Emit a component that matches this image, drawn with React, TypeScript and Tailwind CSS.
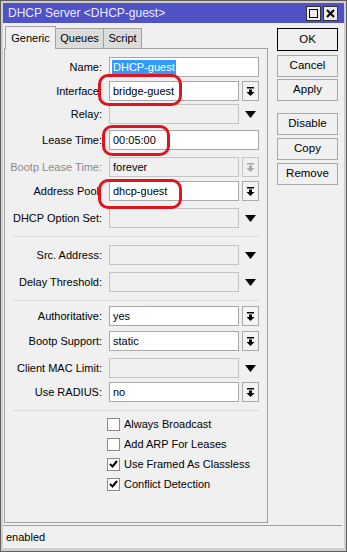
import { ReactNode } from 'react';

type Row = {
  label: string;
  value?: string;
  kind: 'text' | 'select' | 'arrow';
  mt: string;
  disabled?: boolean;
  selected?: boolean;
};

const ROWS_A: Row[] = [
  { label: 'Name:', value: 'DHCP-guest', kind: 'text', mt: 'mt-[8px]', selected: true },
  { label: 'Interface:', value: 'bridge-guest', kind: 'select', mt: 'mt-[4px]' },
  { label: 'Relay:', kind: 'arrow', mt: 'mt-[3px]', disabled: true },
  { label: 'Lease Time:', value: '00:05:00', kind: 'text', mt: 'mt-[6px]' },
  { label: 'Bootp Lease Time:', value: 'forever', kind: 'select', mt: 'mt-[7px]', disabled: true },
  { label: 'Address Pool:', value: 'dhcp-guest', kind: 'select', mt: 'mt-[4px]' },
  { label: 'DHCP Option Set:', kind: 'arrow', mt: 'mt-[7px]', disabled: true },
];

const ROWS_B: Row[] = [
  { label: 'Src. Address:', kind: 'arrow', mt: 'mt-[8px]', disabled: true },
  { label: 'Delay Threshold:', kind: 'arrow', mt: 'mt-[7px]', disabled: true },
];

const ROWS_C: Row[] = [
  { label: 'Authoritative:', value: 'yes', kind: 'select', mt: 'mt-[5px]' },
  { label: 'Bootp Support:', value: 'static', kind: 'select', mt: 'mt-[5px]' },
  { label: 'Client MAC Limit:', kind: 'arrow', mt: 'mt-[7px]', disabled: true },
  { label: 'Use RADIUS:', value: 'no', kind: 'select', mt: 'mt-[4px]' },
];

const CHECKS = [
  { label: 'Always Broadcast', on: false },
  { label: 'Add ARP For Leases', on: false },
  { label: 'Use Framed As Classless', on: true },
  { label: 'Conflict Detection', on: true },
];

function DropIcon({ muted }: { muted?: boolean }) {
  const c = muted ? '#a8a8a8' : '#000';
  return (
    <svg width="9" height="9" viewBox="0 0 9 9">
      <rect x="1" y="0" width="7" height="1.5" fill={c} />
      <path d="M3 2.5h3v2.5h2.5L4.5 9 0.5 5H3z" fill={c} />
    </svg>
  );
}

function Arrow() {
  return (
    <svg width="11" height="7" viewBox="0 0 11 7">
      <path d="M0 0h11L5.5 7z" fill="#000" />
    </svg>
  );
}

function Field({ row }: { row: Row }) {
  const box = row.disabled
    ? 'bg-[#f0f0f0] border-[#c4c4c4] text-[#000]'
    : 'bg-white border-[#a9a9a9] text-black';
  const wide = row.kind === 'text';
  return (
    <div className="flex items-center gap-[3px]">
      <div className={`h-[20px] border flex items-center pl-[2px] ${box} ${wide ? 'w-[150px]' : 'w-[130px]'}`}>
        {row.value && (
          <span className={row.selected ? 'bg-[#3399ff] text-white px-[1px] py-[2px]' : 'px-[1px]'}>{row.value}</span>
        )}
      </div>
      {row.kind === 'select' && (
        <div
          className={`w-[17px] h-[20px] border flex items-center justify-center ${
            row.disabled ? 'border-[#c4c4c4] bg-[#f0f0f0]' : 'border-[#a9a9a9] bg-[#f4f4f4]'
          }`}
        >
          <DropIcon muted={row.disabled} />
        </div>
      )}
      {row.kind === 'arrow' && (
        <div className="w-[17px] h-[20px] flex items-center justify-center">
          <Arrow />
        </div>
      )}
    </div>
  );
}

function FormRow({ row }: { row: Row }) {
  const muted = row.label === 'Bootp Lease Time:';
  return (
    <div className={`flex items-center ${row.mt}`}>
      <div className={`w-[98px] text-right pr-[1px] whitespace-nowrap ${muted ? 'text-[#8a8a8a]' : 'text-black'}`}>
        {row.label}
      </div>
      <div className="ml-[6px]">
        <Field row={row} />
      </div>
    </div>
  );
}

function Sep({ mt }: { mt: string }) {
  return <div className={`${mt} mx-[8px] h-[1px] bg-[#d8d8d8]`} />;
}

function Btn({ children, primary, mt }: { children: ReactNode; primary?: boolean; mt: string }) {
  return (
    <div
      className={`${mt} w-[61px] flex items-center justify-center bg-[#f0f0f0] border text-[11.5px] ${
        primary ? 'h-[23px] border-black' : 'h-[22px] border-[#a8a8a8]'
      }`}
    >
      {children}
    </div>
  );
}

function Circle({ cls }: { cls: string }) {
  return <div className={`absolute border-[3px] border-[#e0141e] rounded-[10px] ${cls}`} />;
}

export default function App() {
  return (
    <div
      className="w-[347px] h-[552px] bg-[#5e5e5e] p-[1px] text-[11px] leading-none"
      style={{ fontFamily: '"Liberation Sans", "DejaVu Sans", sans-serif' }}
    >
      <div className="h-full bg-[#cfcfcf] px-[2px] pt-[2px] pb-[3px] flex flex-col">
        {/* title bar */}
        <div className="h-[20px] bg-[#5152c6] flex items-center pl-[5px] pr-[6px]">
          <span className="text-[#ececff] text-[12px]">DHCP Server &lt;DHCP-guest&gt;</span>
          <div className="ml-auto flex gap-[2px]">
            <div className="w-[15px] h-[15px] bg-[#ececec] border border-[#333] flex items-center justify-center">
              <div className="w-[9px] h-[9px] border-[1.5px] border-black" />
            </div>
            <div className="w-[15px] h-[15px] bg-[#ececec] border border-[#333] flex items-center justify-center">
              <svg width="9" height="9" viewBox="0 0 9 9">
                <path d="M1 1l7 7M8 1L1 8" stroke="#000" strokeWidth="2" />
              </svg>
            </div>
          </div>
        </div>

        <div className="flex-1 bg-[#f0f0f0] flex flex-col relative">
          <div className="flex flex-1">
            {/* left: tabs + panel */}
            <div className="ml-[1px] w-[264px] flex flex-col">
              <div className="flex items-end h-[25px] pl-[1px]">
                <div className="h-[23px] w-[51px] bg-[#f0f0f0] border border-b-0 border-[#a0a0a0] flex items-center justify-center relative top-[1px] z-10">
                  Generic
                </div>
                <div className="h-[20px] w-[48px] bg-[#dcdcdc] border-t border-r border-[#a0a0a0] flex items-center justify-center">
                  Queues
                </div>
                <div className="h-[20px] w-[38px] bg-[#dcdcdc] border-t border-r border-[#a0a0a0] flex items-center justify-center">
                  Script
                </div>
              </div>
              <div className="mb-[2px] flex-1 border border-[#a0a0a0] bg-[#f0f0f0]">
                {ROWS_A.map((r) => (
                  <FormRow key={r.label} row={r} />
                ))}
                <Sep mt="mt-[8px]" />
                {ROWS_B.map((r) => (
                  <FormRow key={r.label} row={r} />
                ))}
                <Sep mt="mt-[8px]" />
                {ROWS_C.map((r) => (
                  <FormRow key={r.label} row={r} />
                ))}
                <Sep mt="mt-[8px]" />
                <div className="mt-[6px] ml-[102px] flex flex-col gap-[6px]">
                  {CHECKS.map((c) => (
                    <div key={c.label} className="flex items-center gap-[4px] h-[14px]">
                      <div className="w-[13px] h-[13px] border border-[#8a8a8a] bg-white flex items-center justify-center">
                        {c.on && (
                          <svg width="9" height="8" viewBox="0 0 9 8">
                            <path d="M1 4l2.5 2.5L8 1" stroke="#000" strokeWidth="2" fill="none" />
                          </svg>
                        )}
                      </div>
                      <span>{c.label}</span>
                    </div>
                  ))}
                </div>
              </div>
            </div>

            {/* right: buttons */}
            <div className="ml-[9px] flex flex-col">
              <Btn primary mt="mt-[5px]">OK</Btn>
              <Btn mt="mt-[4px]">Cancel</Btn>
              <Btn mt="mt-[2px]">Apply</Btn>
              <Btn mt="mt-[12px]">Disable</Btn>
              <Btn mt="mt-[3px]">Copy</Btn>
              <Btn mt="mt-[3px]">Remove</Btn>
            </div>
          </div>

          {/* status bar */}
          <div className="h-[23px] border-t border-[#a0a0a0] flex items-center pl-[3px] mr-[2px]">
            enabled
          </div>

          <Circle cls="left-[95px] top-[51px] w-[84px] h-[32px]" />
          <Circle cls="left-[99px] top-[102px] w-[68px] h-[31px]" />
          <Circle cls="left-[95px] top-[156px] w-[84px] h-[30px]" />
        </div>
      </div>
    </div>
  );
}
